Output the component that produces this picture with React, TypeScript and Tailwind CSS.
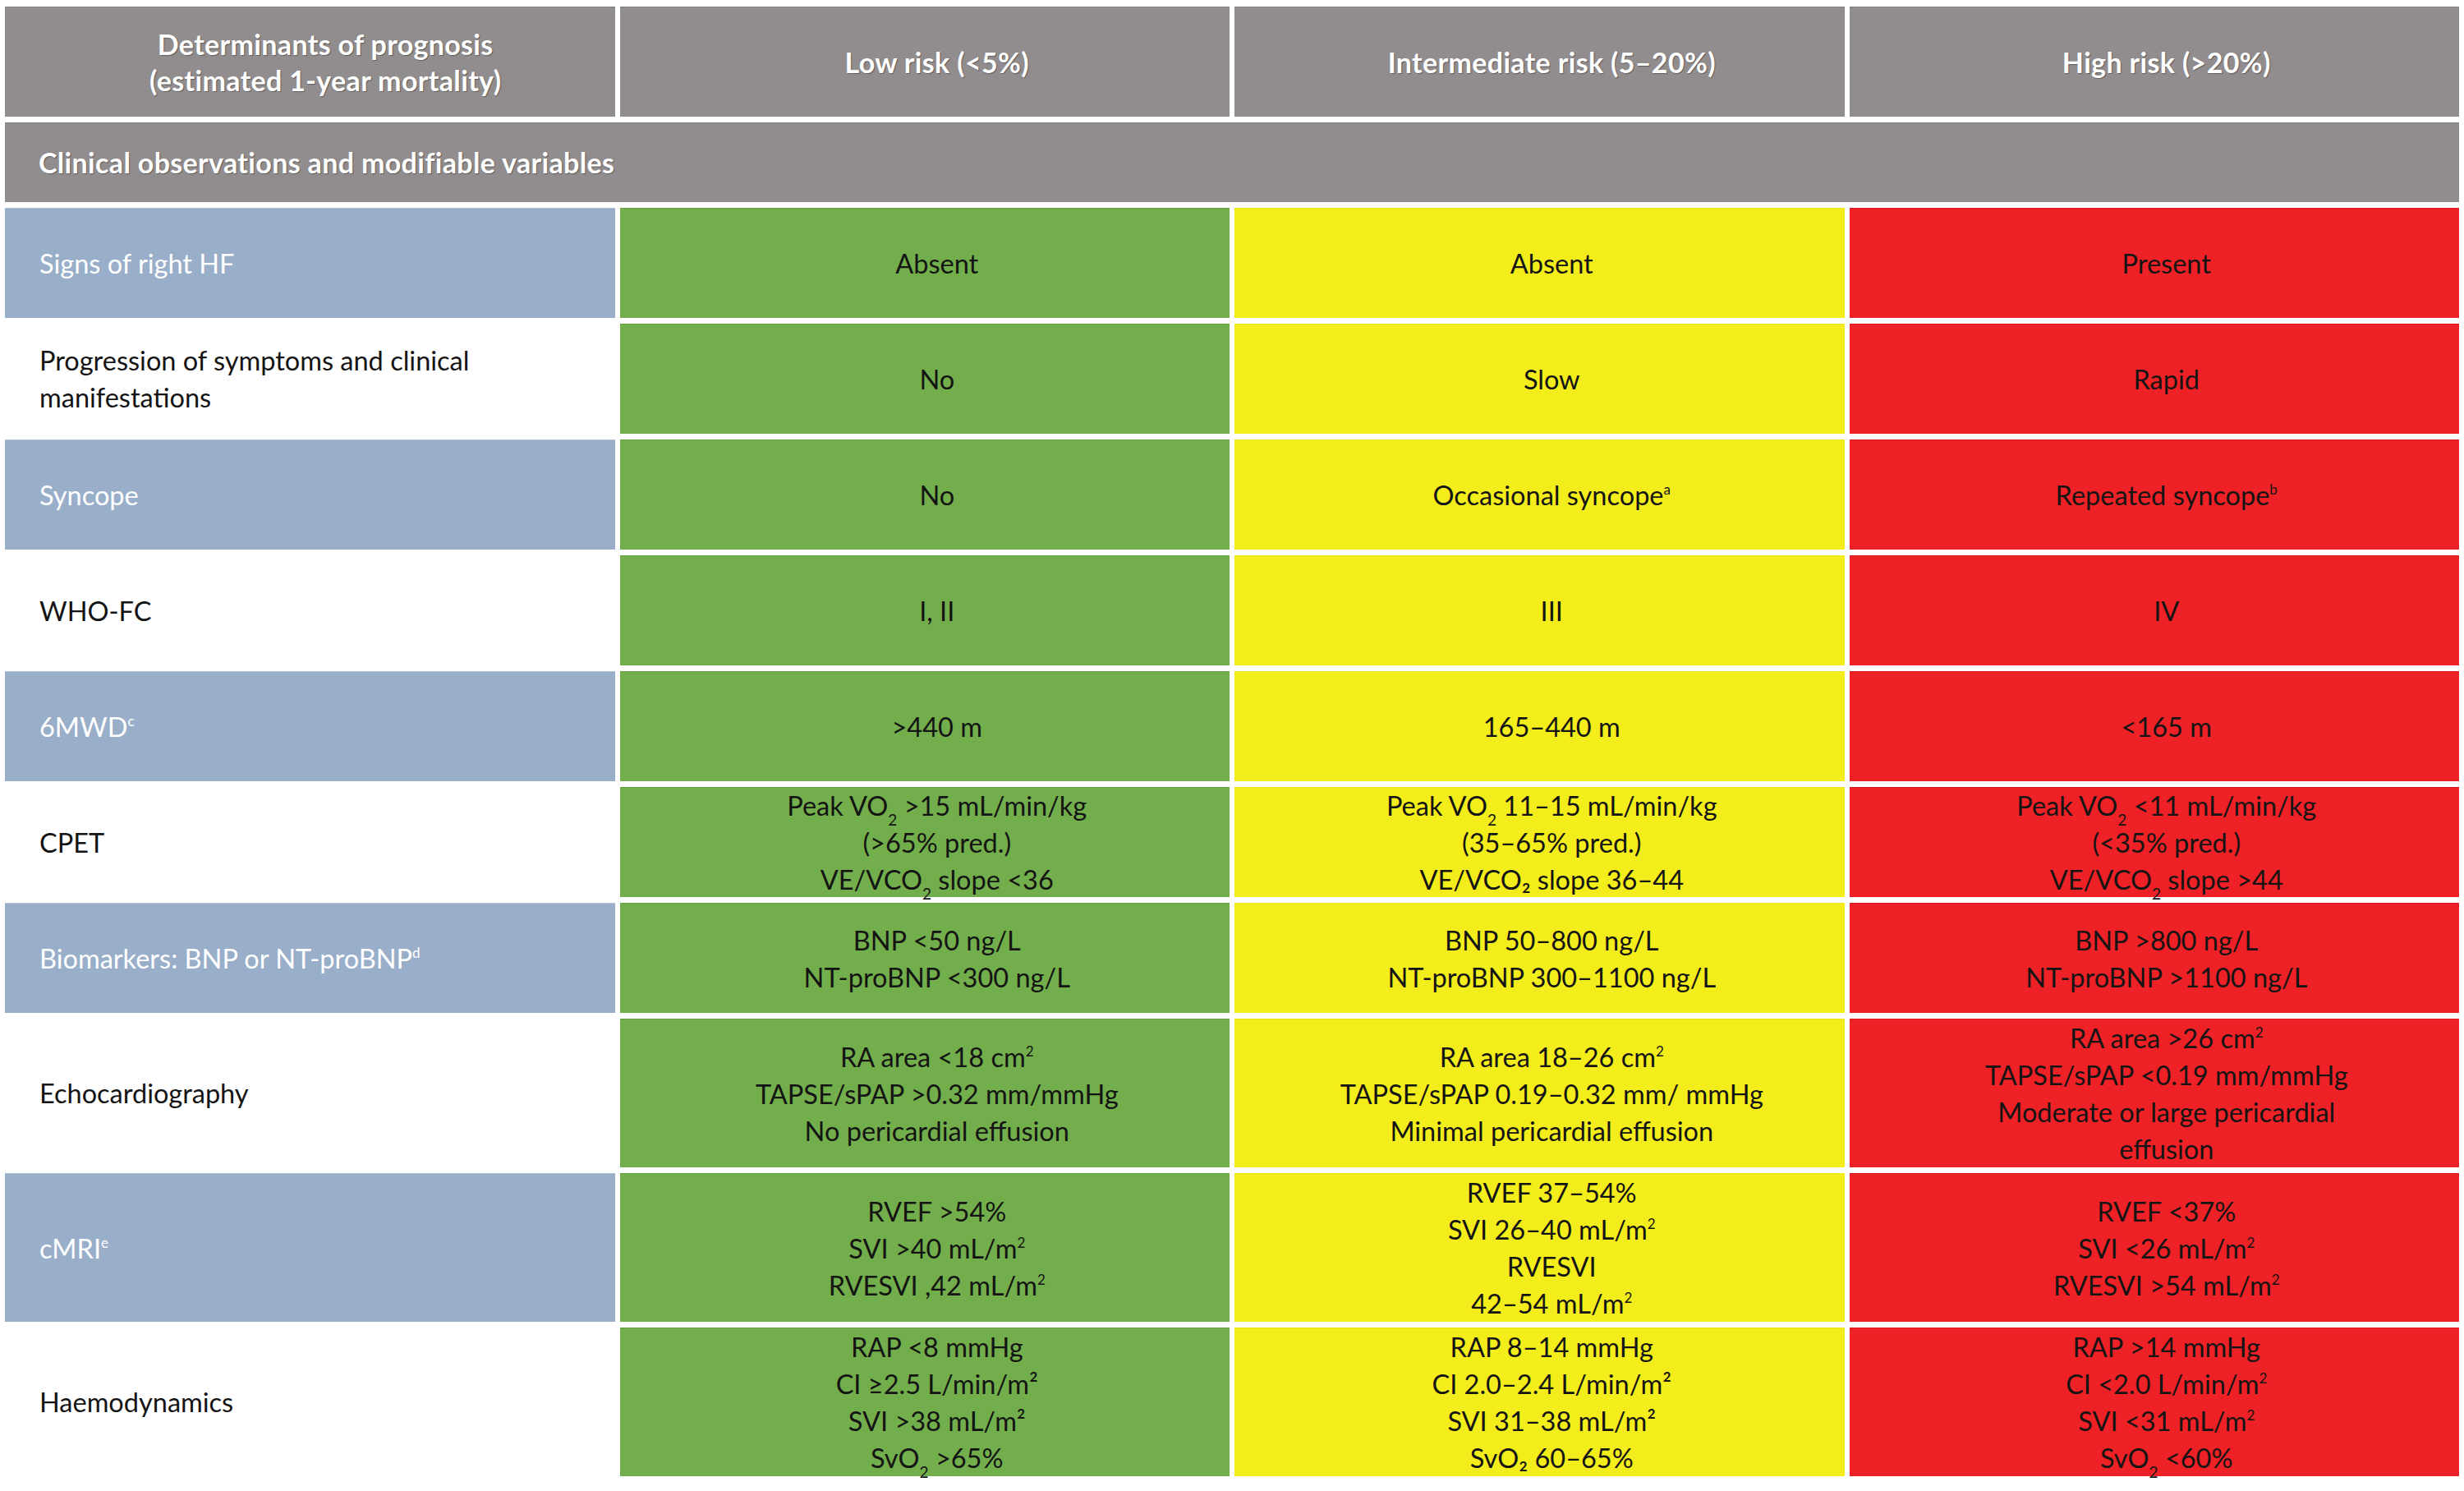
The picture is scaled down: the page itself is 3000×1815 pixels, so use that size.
import type React from "react"

type Row = {
  label: React.ReactNode
  blue: boolean
  tall?: boolean
  low: React.ReactNode[]
  mid: React.ReactNode[]
  high: React.ReactNode[]
}

const Sub = ({ children }: { children: React.ReactNode }) => (
  <sub className="text-[19px] -bottom-[12px]">{children}</sub>
)

const Sup = ({ children }: { children: React.ReactNode }) => (
  <sup className="text-[17px] -top-[13px]">{children}</sup>
)

const rows: Row[] = [
  {
    label: "Signs of right HF",
    blue: true,
    low: ["Absent"],
    mid: ["Absent"],
    high: ["Present"],
  },
  {
    label: (
      <>
        Progression of symptoms and clinical
        <br />
        manifestations
      </>
    ),
    blue: false,
    low: ["No"],
    mid: ["Slow"],
    high: ["Rapid"],
  },
  {
    label: "Syncope",
    blue: true,
    low: ["No"],
    mid: [
      <>
        Occasional syncope<Sup>a</Sup>
      </>,
    ],
    high: [
      <>
        Repeated syncope<Sup>b</Sup>
      </>,
    ],
  },
  {
    label: "WHO-FC",
    blue: false,
    low: ["I, II"],
    mid: ["III"],
    high: ["IV"],
  },
  {
    label: (
      <>
        6MWD<Sup>c</Sup>
      </>
    ),
    blue: true,
    low: [">440 m"],
    mid: ["165–440 m"],
    high: ["<165 m"],
  },
  {
    label: "CPET",
    blue: false,
    low: [
      <>
        Peak VO<Sub>2</Sub> &gt;15 mL/min/kg
      </>,
      "(>65% pred.)",
      <>
        VE/VCO<Sub>2</Sub> slope &lt;36
      </>,
    ],
    mid: [
      <>
        Peak VO<Sub>2</Sub> 11–15 mL/min/kg
      </>,
      "(35–65% pred.)",
      "VE/VCO₂ slope 36–44",
    ],
    high: [
      <>
        Peak VO<Sub>2</Sub> &lt;11 mL/min/kg
      </>,
      "(<35% pred.)",
      <>
        VE/VCO<Sub>2</Sub> slope &gt;44
      </>,
    ],
  },
  {
    label: (
      <>
        Biomarkers: BNP or NT-proBNP<Sup>d</Sup>
      </>
    ),
    blue: true,
    low: ["BNP <50 ng/L", "NT-proBNP <300 ng/L"],
    mid: ["BNP 50–800 ng/L", "NT-proBNP 300–1100 ng/L"],
    high: ["BNP >800 ng/L", "NT-proBNP >1100 ng/L"],
  },
  {
    label: "Echocardiography",
    blue: false,
    tall: true,
    low: [
      <>
        RA area &lt;18 cm<Sup>2</Sup>
      </>,
      "TAPSE/sPAP >0.32 mm/mmHg",
      "No pericardial effusion",
    ],
    mid: [
      <>
        RA area 18–26 cm<Sup>2</Sup>
      </>,
      "TAPSE/sPAP 0.19–0.32 mm/ mmHg",
      "Minimal pericardial effusion",
    ],
    high: [
      <>
        RA area &gt;26 cm<Sup>2</Sup>
      </>,
      "TAPSE/sPAP <0.19 mm/mmHg",
      "Moderate or large pericardial",
      "effusion",
    ],
  },
  {
    label: (
      <>
        cMRI<Sup>e</Sup>
      </>
    ),
    blue: true,
    tall: true,
    low: [
      "RVEF >54%",
      <>
        SVI &gt;40 mL/m<Sup>2</Sup>
      </>,
      <>
        RVESVI ,42 mL/m<Sup>2</Sup>
      </>,
    ],
    mid: [
      "RVEF 37–54%",
      <>
        SVI 26–40 mL/m<Sup>2</Sup>
      </>,
      "RVESVI",
      <>
        42–54 mL/m<Sup>2</Sup>
      </>,
    ],
    high: [
      "RVEF <37%",
      <>
        SVI &lt;26 mL/m<Sup>2</Sup>
      </>,
      <>
        RVESVI &gt;54 mL/m<Sup>2</Sup>
      </>,
    ],
  },
  {
    label: "Haemodynamics",
    blue: false,
    tall: true,
    low: [
      "RAP <8 mmHg",
      "CI ≥2.5 L/min/m²",
      "SVI >38 mL/m²",
      <>
        SvO<Sub>2</Sub> &gt;65%
      </>,
    ],
    mid: ["RAP 8–14 mmHg", "CI 2.0–2.4 L/min/m²", "SVI 31–38 mL/m²", "SvO₂ 60–65%"],
    high: [
      "RAP >14 mmHg",
      <>
        CI &lt;2.0 L/min/m<Sup>2</Sup>
      </>,
      <>
        SVI &lt;31 mL/m<Sup>2</Sup>
      </>,
      <>
        SvO<Sub>2</Sub> &lt;60%
      </>,
    ],
  },
]

const headText =
  "text-white font-bold text-[34px] tracking-[0.01em] leading-[44px] [text-shadow:1px_1px_1px_rgba(0,0,0,0.35)]"

function ValueCell({ lines, tone }: { lines: React.ReactNode[]; tone: string }) {
  return (
    <div className={`flex flex-col items-center justify-center pl-[30px] text-center text-[#141414] ${tone}`}>
      {lines.map((line, i) => (
        <div key={i} className="whitespace-nowrap">
          {line}
        </div>
      ))}
    </div>
  )
}

export default function App() {
  return (
    <div className="w-[3000px] min-h-[1815px] bg-white pt-[8px] pl-[6px] font-[Lato,'Open_Sans',sans-serif] text-[32.5px] leading-[45px]">
      <div className="grid w-[2988px] grid-cols-4 grid-rows-[134px_97px_repeat(7,134px)_repeat(3,181px)] gap-x-[6px] gap-y-[7px]">
        <div className={`flex items-center justify-center pl-[38px] text-center bg-[#918d8e] border-t border-[#828080] ${headText}`}>
          Determinants of prognosis
          <br />
          (estimated 1-year mortality)
        </div>
        <div className={`flex items-center justify-center pl-[30px] bg-[#918d8e] border-t border-[#828080] ${headText}`}>
          Low risk (&lt;5%)
        </div>
        <div className={`flex items-center justify-center pl-[30px] bg-[#918d8e] border-t border-[#828080] ${headText}`}>
          Intermediate risk (5–20%)
        </div>
        <div className={`flex items-center justify-center pl-[30px] bg-[#918d8e] border-t border-[#828080] ${headText}`}>
          High risk (&gt;20%)
        </div>

        <div className={`col-span-4 flex items-center pl-[41px] bg-[#918d8e] border-t border-[#828080] ${headText}`}>
          Clinical observations and modifiable variables
        </div>

        {rows.map((row, i) => (
          <div key={i} className="contents">
            <div
              className={`flex items-center pl-[42px] ${
                row.blue ? "bg-[#99aec9] border-t border-[#aebfd4] text-white" : "bg-white text-[#141414]"
              }`}
            >
              <div>{row.label}</div>
            </div>
            <ValueCell lines={row.low} tone="bg-[#72ae4b] border-t border-[#649f40]" />
            <ValueCell lines={row.mid} tone="bg-[#f4ed1c] border-t border-[#ece41a]" />
            <ValueCell lines={row.high} tone="bg-[#ed2126] border-t border-[#d91b20]" />
          </div>
        ))}
      </div>
    </div>
  )
}
